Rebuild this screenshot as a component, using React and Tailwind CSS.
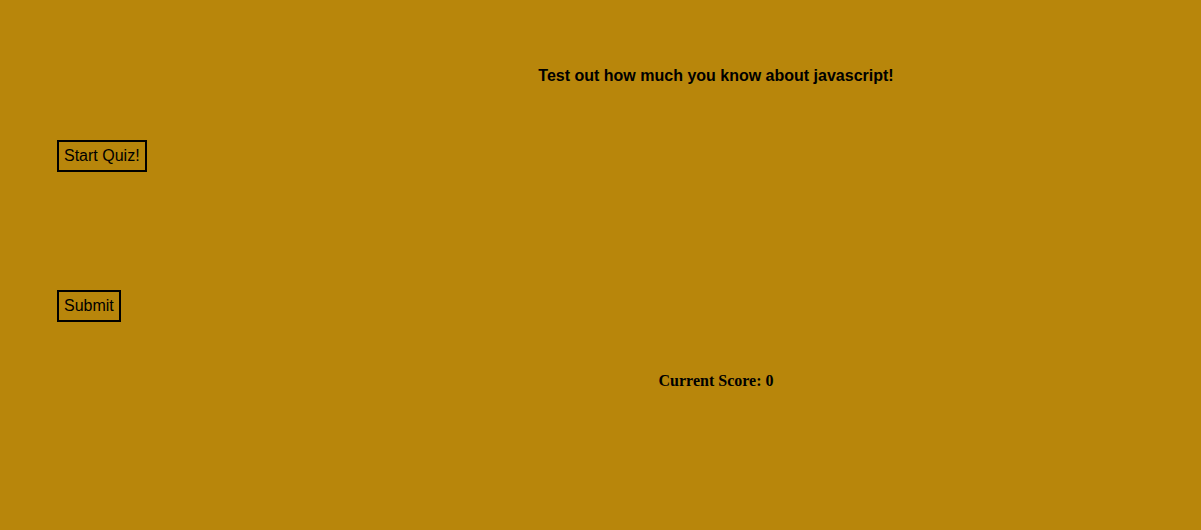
export default function App() {
  return (
    <div className="min-h-[530px] w-full bg-[#b8860b] flex text-black">
      <div className="w-[231px] shrink-0 pl-[57px] pt-[140px] flex flex-col items-start font-['Liberation_Sans',Arial,sans-serif]">
        <button className="h-8 border-2 border-black px-[5px] text-[16px] leading-[18px] flex items-center bg-transparent text-black">
          Start Quiz!
        </button>
        <button className="mt-[118px] h-8 border-2 border-black px-[5px] text-[16px] leading-[18px] flex items-center bg-transparent text-black">
          Submit
        </button>
      </div>
      <div className="flex-1 flex flex-col items-center">
        <h2 className="mt-[67px] text-[16px] leading-[18px] font-bold font-['Liberation_Sans',Arial,sans-serif]">
          Test out how much you know about javascript!
        </h2>
        <p className="mt-[287px] text-[16px] leading-[18px] font-bold font-['Liberation_Serif','Times_New_Roman',serif]">
          Current Score: 0
        </p>
      </div>
    </div>
  );
}
